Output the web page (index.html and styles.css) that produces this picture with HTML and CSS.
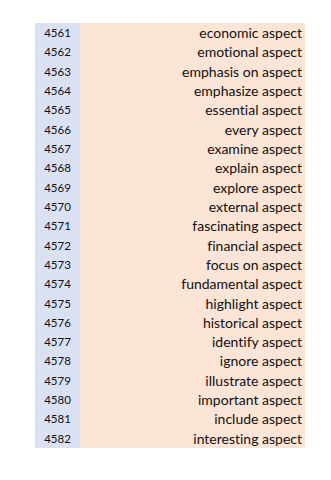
FILE: index.html
```html
<!DOCTYPE html>
<html>
<head>
<meta charset="utf-8">
<link rel="stylesheet" href="styles.css">
</head>
<body>
<div class="sheet">
  <div class="row"><span class="num">4561</span><span class="txt">economic aspect</span></div>
  <div class="row"><span class="num">4562</span><span class="txt">emotional aspect</span></div>
  <div class="row"><span class="num">4563</span><span class="txt">emphasis on aspect</span></div>
  <div class="row"><span class="num">4564</span><span class="txt">emphasize aspect</span></div>
  <div class="row"><span class="num">4565</span><span class="txt">essential aspect</span></div>
  <div class="row"><span class="num">4566</span><span class="txt">every aspect</span></div>
  <div class="row"><span class="num">4567</span><span class="txt">examine aspect</span></div>
  <div class="row"><span class="num">4568</span><span class="txt">explain aspect</span></div>
  <div class="row"><span class="num">4569</span><span class="txt">explore aspect</span></div>
  <div class="row"><span class="num">4570</span><span class="txt">external aspect</span></div>
  <div class="row"><span class="num">4571</span><span class="txt">fascinating aspect</span></div>
  <div class="row"><span class="num">4572</span><span class="txt">financial aspect</span></div>
  <div class="row"><span class="num">4573</span><span class="txt">focus on aspect</span></div>
  <div class="row"><span class="num">4574</span><span class="txt">fundamental aspect</span></div>
  <div class="row"><span class="num">4575</span><span class="txt">highlight aspect</span></div>
  <div class="row"><span class="num">4576</span><span class="txt">historical aspect</span></div>
  <div class="row"><span class="num">4577</span><span class="txt">identify aspect</span></div>
  <div class="row"><span class="num">4578</span><span class="txt">ignore aspect</span></div>
  <div class="row"><span class="num">4579</span><span class="txt">illustrate aspect</span></div>
  <div class="row"><span class="num">4580</span><span class="txt">important aspect</span></div>
  <div class="row"><span class="num">4581</span><span class="txt">include aspect</span></div>
  <div class="row"><span class="num">4582</span><span class="txt">interesting aspect</span></div>
</div>
</body>
</html>
```
FILE: styles.css
```css
html, body {
  margin: 0;
  padding: 0;
  background: #ffffff;
}
body {
  padding: 23px 0 0 35px;
  font-family: Lato, "Open Sans", sans-serif;
  font-size: 14px;
  color: #111111;
  font-variant-ligatures: none;
  font-feature-settings: "liga" 0, "clig" 0;
}
.sheet {
  width: 270px;
  display: grid;
  grid-template-columns: 45px 225px;
  grid-auto-rows: 19.32px;
}
.row {
  display: contents;
}
.num {
  background: #d9e1f2;
  display: flex;
  align-items: center;
  justify-content: center;
  font-size: 11.5px;
}
.txt {
  background: #fce4d6;
  display: flex;
  align-items: center;
  justify-content: flex-end;
  padding-right: 3px;
}
```
